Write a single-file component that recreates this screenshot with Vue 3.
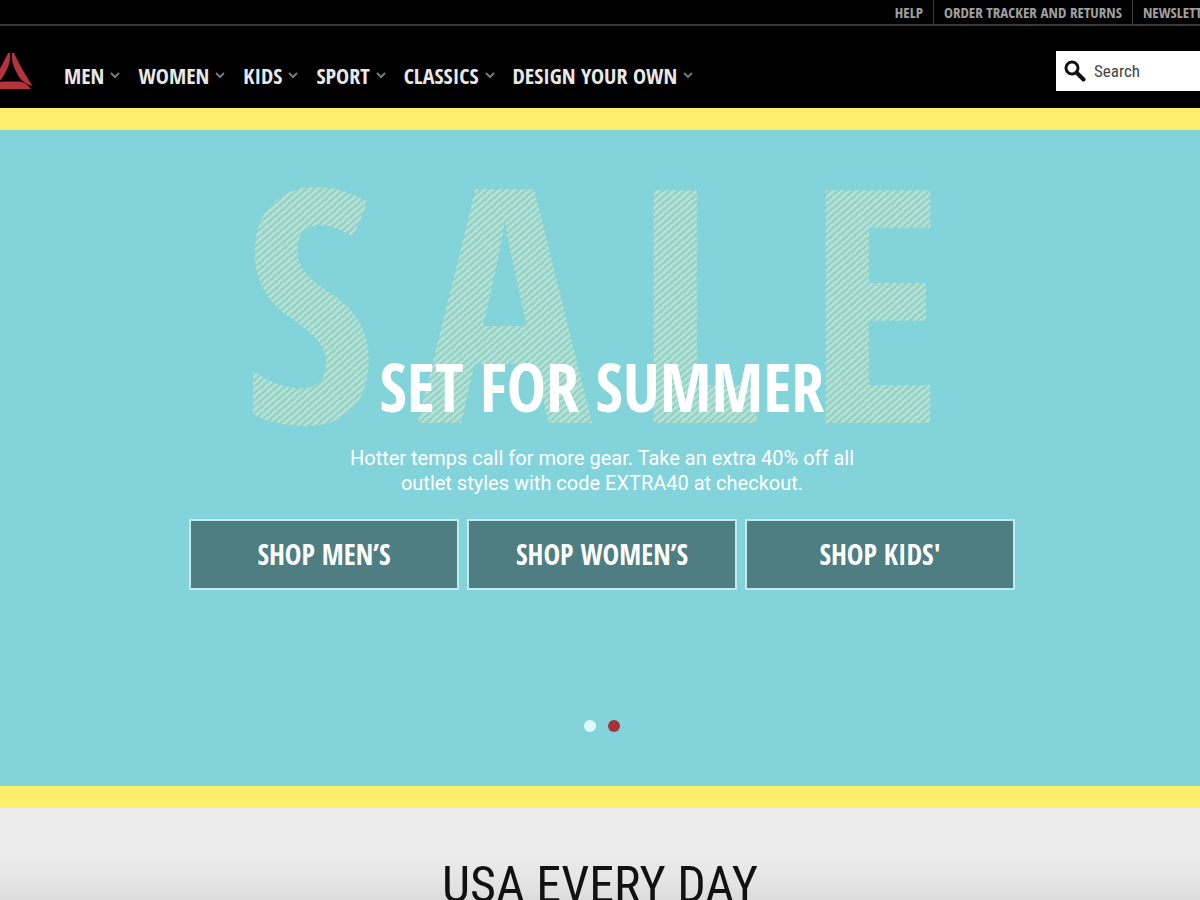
<script setup>
const utilityLinks = ['HELP', 'ORDER TRACKER AND RETURNS', 'NEWSLETTER']
const navItems = ['MEN', 'WOMEN', 'KIDS', 'SPORT', 'CLASSICS', 'DESIGN YOUR OWN']
const shopLinks = ['SHOP MEN’S', 'SHOP WOMEN’S', "SHOP KIDS'"]
const slides = [{ active: false }, { active: true }]
</script>

<template>
  <div class="page">
    <header class="header">
      <div class="bleed">
        <nav class="utility" aria-label="Utility">
          <a v-for="link in utilityLinks" :key="link" href="#">{{ link }}</a>
        </nav>
        <div class="main-bar">
          <a class="logo" href="#" aria-label="Home">
            <svg viewBox="0 0 44 37" width="44" height="37" aria-hidden="true">
              <path d="M22 0 L24 0 C28 9 35 21 42.500 33 C36 31 31 28 28 22 C24 15 22 10 22 4 Z" />
              <path d="M20 0 L18 0 C14 9 7 21 -0.500 33 C6 31 11 28 14 22 C18 15 20 10 20 4 Z" />
              <path d="M1 36 C5 31 8 29 13 28.500 L29 28.500 C34 29 37 31 41 36 Z" />
            </svg>
          </a>
          <nav class="primary" aria-label="Primary">
            <a v-for="item in navItems" :key="item" href="#">
              {{ item }}
              <svg viewBox="0 0 10 7" width="10" height="7" aria-hidden="true">
                <path d="M1 1 L5 5 L9 1" />
              </svg>
            </a>
          </nav>
          <form class="search" role="search" @submit.prevent>
            <svg viewBox="0 0 22 22" width="22" height="22" aria-hidden="true">
              <circle cx="8" cy="8" r="6" />
              <path d="M12.500 12.500 L19.500 19.500" />
            </svg>
            <input type="search" placeholder="Search" aria-label="Search" />
          </form>
        </div>
      </div>
    </header>

    <main>
      <section class="hero">
        <div class="banner">
          <div class="sale">
            <span>S</span><span>A</span><span>L</span><span>E</span>
          </div>
          <h1>SET FOR SUMMER</h1>
        </div>
        <p>Hotter temps call for more gear. Take an extra 40% off all outlet styles with code EXTRA40 at checkout.</p>
        <div class="shop">
          <a v-for="link in shopLinks" :key="link" href="#">{{ link }}</a>
        </div>
        <div class="dots">
          <button
            v-for="(slide, i) in slides"
            :key="i"
            type="button"
            :class="{ active: slide.active }"
            :aria-label="`Slide ${i + 1}`"
          ></button>
        </div>
      </section>

      <section class="story">
        <h2>USA EVERY DAY</h2>
      </section>
    </main>
  </div>
</template>

<style>
body {
  background: #e9e9e9;
}
</style>

<style scoped>
.page {
  font-family: 'Open Sans Condensed', 'Roboto Condensed', sans-serif;
}

a {
  color: inherit;
  text-decoration: none;
}

.header {
  overflow: hidden;
  background: #000;
}

.bleed {
  margin: 0 -24px 0 -10px;
}

.utility {
  display: flex;
  justify-content: flex-end;
  margin-right: -2px;
  border-bottom: 2px solid #3a3a3a;
  color: #a0a0a0;
  font-size: 15px;
  font-weight: 700;
  line-height: 24px;
}

.utility a {
  padding: 0 10px;
}

.utility a + a {
  border-left: 1px solid #3a3a3a;
}

.main-bar {
  display: flex;
  align-items: center;
  box-sizing: border-box;
  height: 82px;
  padding-top: 8px;
}

.logo {
  display: flex;
  margin-right: 30px;
}

.logo path {
  fill: #b5333c;
}

.primary {
  display: flex;
  flex: 1;
  gap: 18px;
  padding-top: 8px;
  color: #e8e8e8;
  font-size: 22px;
  font-weight: 700;
  line-height: 24px;
  white-space: nowrap;
}

.primary a {
  display: flex;
  align-items: center;
  gap: 6px;
}

.primary path {
  fill: none;
  stroke: #777;
  stroke-width: 2;
}

.search {
  display: flex;
  align-items: center;
  gap: 8px;
  width: 160px;
  height: 40px;
  padding-left: 8px;
  background: #fff;
}

.search svg {
  flex: none;
  fill: none;
  stroke: #111;
  stroke-width: 3;
}

.search path {
  stroke-width: 4;
  stroke-linecap: round;
}

.search input {
  flex: 1;
  min-width: 0;
  padding: 0;
  border: 0;
  outline: 0;
  background: none;
  color: #333;
  font: 17px 'Roboto Condensed', 'Liberation Sans', sans-serif;
}

.search input::placeholder {
  color: #444;
  opacity: 1;
}

.hero {
  display: flex;
  flex-direction: column;
  align-items: center;
  padding: 4px 0 54px 4px;
  border-top: 22px solid #fdef69;
  border-bottom: 22px solid #fdef69;
  background: #82d3da;
  color: #fff;
  text-align: center;
}

.banner {
  display: grid;
  justify-items: center;
  align-items: end;
  font-weight: 700;
}

.banner > * {
  grid-area: 1 / 1;
}

.sale {
  display: flex;
  gap: 41px;
  padding-right: 18px;
  background: repeating-linear-gradient(139deg, #b0e4d7 0 2px, #9bd0c7 3px 5px);
  background-clip: text;
  -webkit-background-clip: text;
  color: transparent;
  font-size: 326px;
  line-height: 326px;
}

h1 {
  margin: 0 0 42px;
  font-size: 66px;
  font-weight: 700;
  line-height: 64px;
}

.hero p {
  max-width: 520px;
  margin: -14px 0 0;
  color: #fff;
  font-family: Roboto, 'Liberation Sans', sans-serif;
  font-size: 20px;
  line-height: 25px;
}

.shop {
  display: flex;
  gap: 8px;
  width: 826px;
  max-width: 100%;
  margin-top: 23px;
}

.shop a {
  flex: 1;
  border: 2px solid #c4eaed;
  background: #4e7e81;
  font-size: 28px;
  font-weight: 700;
  line-height: 67px;
}

.dots {
  display: flex;
  gap: 12px;
  margin-top: 130px;
}

.dots button {
  width: 12px;
  height: 12px;
  padding: 0;
  border: 0;
  border-radius: 50%;
  background: #e2f7f9;
}

.dots .active {
  background: #a8323c;
}

.story {
  padding: 45px 0 30px;
  background: linear-gradient(#eaeaea 0 50px, #e5e5e5 72px, #dcdcdc 92px);
  color: #111;
  text-align: center;
}

h2 {
  margin: 0;
  font-family: 'Roboto Condensed', sans-serif;
  font-size: 50px;
  font-weight: 400;
  line-height: 64px;
}
</style>
